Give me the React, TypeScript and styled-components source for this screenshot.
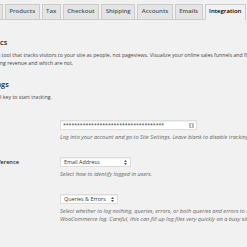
import styled, { createGlobalStyle } from "styled-components";

const tabs = ["General", "Products", "Tax", "Checkout", "Shipping", "Accounts", "Emails", "Integration"];

const GlobalStyle = createGlobalStyle`
  html, body {
    margin: 0;
    background: #f1f1f1;
    overflow: hidden;
  }
  body {
    font-family: "Open Sans", "Liberation Sans", sans-serif;
    color: #444;
  }
`;

const SelectArrows = () => (
  <svg width="3" height="5" viewBox="0 0 3 5">
    <path d="M0 2 L1.5 0 L3 2 Z M0 3 L1.5 5 L3 3 Z" fill="#555" />
  </svg>
);

const KeyBadge = () => (
  <svg width="5" height="5" viewBox="0 0 5 5">
    <rect x="0" y="0" width="5" height="5" rx="1" fill="#bbb" />
    <rect x="2" y="1" width="1" height="3" fill="#fff" />
  </svg>
);

export default function App() {
  return (
    <>
      <GlobalStyle />
      <Page>
        <TabBar>
          {tabs.map((t) => (
            <Tab key={t} active={t === "Integration"}>
              {t}
            </Tab>
          ))}
        </TabBar>

        <Heading first>Kissmetrics</Heading>
        <Intro>
          Web analytics tool that tracks visitors to your site as people, not pageviews. Visualize your online
          sales funnels and find out which
          <br />
          ones are driving revenue and which are not.
        </Intro>

        <Heading>API Settings</Heading>
        <Intro>Enter your API key to start tracking.</Intro>

        <FormTable>
          <Row>
            <Label>API Key</Label>
            <Field>
              <TextInput>
                <span>************************************</span>
                <KeyBadge />
              </TextInput>
              <Hint>Log into your account and go to Site Settings. Leave blank to disable tracking.</Hint>
            </Field>
          </Row>
          <Row>
            <Label>Identity Preference</Label>
            <Field>
              <Select width={71}>
                <span>Email Address</span>
                <SelectArrows />
              </Select>
              <Hint>Select how to identify logged in users.</Hint>
            </Field>
          </Row>
          <Row>
            <Label>Logging</Label>
            <Field>
              <Select width={58}>
                <span>Queries &amp; Errors</span>
                <SelectArrows />
              </Select>
              <Hint>
                Select whether to log nothing, queries, errors, or both queries and errors to the
                <br />
                WooCommerce log. Careful, this can fill up log files very quickly on a busy site.
              </Hint>
            </Field>
          </Row>
        </FormTable>

        <Heading>Event Names</Heading>
      </Page>
    </>
  );
}

const Page = styled.div`
  margin-left: -33px;
  width: 300px;
`;

const TabBar = styled.div`
  display: flex;
  align-items: flex-end;
  padding-top: 4px;
  padding-left: 2px;
  border-bottom: 1px solid #ccc;
  height: 15px;
  box-sizing: content-box;
`;

const Tab = styled.div<{ active?: boolean }>`
  box-sizing: border-box;
  height: ${(p) => (p.active ? "16px" : "15px")};
  margin-bottom: ${(p) => (p.active ? "-1px" : "0")};
  margin-left: 2px;
  padding: 0 3.5px;
  border: 1px solid #ccc;
  border-bottom: ${(p) => (p.active ? "1px solid #f1f1f1" : "none")};
  background: ${(p) => (p.active ? "#f1f1f1" : "#e4e4e4")};
  color: ${(p) => (p.active ? "#000" : "#555")};
  font-size: 6px;
  font-weight: 600;
  line-height: 13px;
  white-space: nowrap;
`;

const Heading = styled.h2<{ first?: boolean }>`
  margin: ${(p) => (p.first ? "18px" : "13px")} 0 0;
  font-size: 7.3px;
  font-weight: 600;
  line-height: 9px;
  color: #23282d;
`;

const Intro = styled.p`
  margin: 4px 0 0;
  font-size: 5.2px;
  line-height: 8px;
  white-space: nowrap;
`;

const FormTable = styled.div`
  margin-top: 11px;
`;

const Row = styled.div`
  display: grid;
  grid-template-columns: 93px 1fr;
  padding: 8px 0;
`;

const Label = styled.div`
  font-size: 5.6px;
  font-weight: 600;
  line-height: 10px;
  color: #23282d;
`;

const Field = styled.div`
  display: flex;
  flex-direction: column;
  align-items: flex-start;
`;

const TextInput = styled.div`
  box-sizing: border-box;
  width: 137px;
  height: 10px;
  display: flex;
  align-items: center;
  justify-content: space-between;
  padding: 0 2px 0 2px;
  background: #fff;
  border: 1px solid #ddd;
  box-shadow: inset 0 1px 1px rgba(0, 0, 0, 0.07);
  font-size: 5.2px;
  color: #32373c;
  letter-spacing: -0.05px;
`;

const Select = styled.div<{ width: number }>`
  box-sizing: border-box;
  width: ${(p) => p.width}px;
  height: 10px;
  display: flex;
  align-items: center;
  justify-content: space-between;
  padding: 0 3px 0 3px;
  background: #fff;
  border: 1px solid #ddd;
  box-shadow: inset 0 1px 1px rgba(0, 0, 0, 0.07);
  font-size: 5.4px;
  color: #32373c;
  white-space: nowrap;
`;

const Hint = styled.p`
  margin: 3px 0 0;
  font-size: 5.6px;
  font-style: italic;
  line-height: 8px;
  color: #666;
  white-space: nowrap;
`;
